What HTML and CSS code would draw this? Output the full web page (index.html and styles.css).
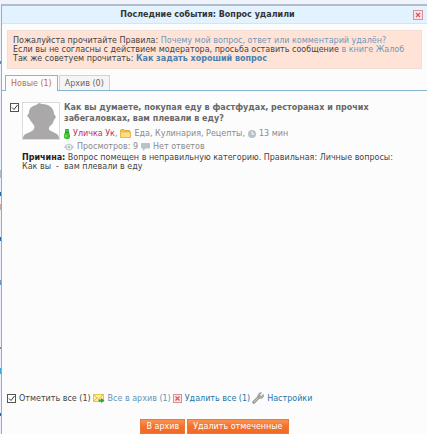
FILE: index.html
```html
<!DOCTYPE html>
<html lang="ru">
<head>
  <meta charset="UTF-8">
  <meta name="viewport" content="width=device-width, initial-scale=1">
  <title>Последние события</title>
  <link rel="stylesheet" href="styles.css">
</head>
<body>

  <div class="popup">
    <div class="popup-head">
      <h1>Последние события: Вопрос удалили</h1>
      <button class="close-btn" type="button" aria-label="Закрыть">
        <svg width="10" height="10" viewBox="0 0 10 10"><rect x=".5" y=".5" width="9" height="9" fill="#fbe3e5" stroke="#d98f95"/><path d="M3 3l4 4M7 3L3 7" stroke="#cf5a62" stroke-width="1.2"/></svg>
      </button>
    </div>

    <div class="notice">
      Пожалуйста прочитайте Правила: <a href="#">Почему мой вопрос, ответ или комментарий удалён?</a><br>
      Если вы не согласны с действием модератора, просьба оставить сообщение <a href="#">в книге Жалоб</a><br>
      Так же советуем прочитать: <a href="#" class="strong">Как задать хороший вопрос</a>
    </div>

    <div class="tabs">
      <button class="tab active" type="button">Новые (1)</button>
      <button class="tab" type="button">Архив (0)</button>
    </div>

    <div class="events">
      <div class="event">
        <input type="checkbox" class="check" aria-label="Отметить событие" checked>
        <div class="event-body">
          <div class="question">
            <svg class="avatar" viewBox="0 0 38 38"><rect x=".5" y=".5" width="37" height="37" fill="#fff" stroke="#dcdcdc"/><path d="M1 37C1 33 3 32 6 31L10 29C13 27 13 24 11 22L8 18L7 16L5 14L7 11C7 6 10 4 14 3L17 1L20 2C27 2 32 6 32 12L34 15L32 18C31 21 30 23 28 24C26 27 27 28 29 29L33 31C36 32 37 34 37 37Z" fill="#aaa8a9"/></svg>
            <div class="question-info">
              <h2>Как вы думаете, покупая еду в фастфудах, ресторанах и прочих<br>забегаловках, вам плевали в еду?</h2>
              <div class="meta">
                <svg width="6" height="10" viewBox="0 0 6 10"><path d="M1 0H5V3L6 6V8Q6 10 3 10T0 8V6L1 3Z" fill="#3fc231"/><path d="M1 3.5H5" stroke="#23962a"/><path d="M2 6v2" stroke="#b8f099"/></svg>
                <span><a href="#" class="user">Уличка Ук</a>,</span>
                <svg class="folder" width="11" height="9" viewBox="0 0 11 9"><path d="M.5 8V1.5Q.5.5 1.5.5H4L5 1.5H9Q10 1.5 10 2.5V8Z" fill="#f3c04c" stroke="#dda83e"/><path d="M.5 8.5V4Q.5 3 1.5 3H9.5Q10.5 3 10.5 4V8.5Z" fill="#ffdf83" stroke="#e8b850"/></svg>
                <span>Еда, Кулинария, Рецепты,</span>
                <svg class="clock" width="8" height="8" viewBox="0 0 8 8"><circle cx="4" cy="4" r="4" fill="#b9c2c9"/><path d="M4 1.5V4.2H6" fill="none" stroke="#fff"/></svg>
                <span>13 мин</span>
              </div>
              <div class="meta">
                <svg width="10" height="8" viewBox="0 0 10 8"><path d="M0 4Q5-3 10 4Q5 11 0 4Z" fill="#c0c9cf"/><circle cx="5" cy="4" r="2.3" fill="#fff"/><circle cx="5" cy="4" r="1.4" fill="#b4bec6"/></svg>
                <span>Просмотров: 9</span>
                <svg width="9" height="8" viewBox="0 0 9 8"><path d="M1 0H8Q9 0 9 1V4.5Q9 5.5 8 5.5H4.5L2 8V5.5H1Q0 5.5 0 4.5V1Q0 0 1 0Z" fill="#b9c2c9"/></svg>
                <span>Нет ответов</span>
              </div>
            </div>
          </div>
          <div class="reason"><b>Причина:</b> Вопрос помещен в неправильную категорию. Правильная: Личные вопросы:<br>Как вы&nbsp; -&nbsp; вам плевали в еду</div>
        </div>
      </div>
    </div>

    <div class="actions">
      <label><input type="checkbox" class="check" checked> Отметить все (1)</label>
      <a href="#" class="light">
        <svg width="12" height="10" viewBox="0 0 12 10"><rect x=".5" y="1.5" width="10" height="7" fill="#fff0a0" stroke="#e0c64e"/><path d="M1 2l4.5 4L10 2M1 8l3-3" fill="none" stroke="#dfbd4a"/><path d="M5.5 6.5H8V5L11.5 7.5L8 10V8.5H5.5Z" fill="#31a52d"/></svg>
        Все в архив (1)</a>
      <a href="#">
        <svg width="9" height="9" viewBox="0 0 9 9"><rect x=".5" y=".5" width="8" height="8" fill="#fbe3e5" stroke="#d98f95"/><path d="M2.5 2.5l4 4M6.5 2.5l-4 4" stroke="#cf5a62" stroke-width="1.2"/></svg>
        Удалить все (1)</a>
      <a href="#">
        <svg width="12" height="12" viewBox="0 0 12 12"><path d="M1.8 10.2L7 5" stroke="#888" stroke-width="3" stroke-linecap="round"/><path d="M2 10L7 5" stroke="#c4c4c4" stroke-width="1.2" stroke-linecap="round"/><path d="M9.5.8L7.8 2.5V4.2H9.5L11.3 2.5Q12 5 10.2 6T6.5 5.5Q5.5 3.5 6.5 2T9.5.8Z" fill="#b5b5b5" stroke="#888" stroke-width=".7"/></svg>
        Настройки</a>
    </div>

    <div class="buttons">
      <button type="button">В архив</button>
      <button type="button">Удалить отмеченные</button>
    </div>
  </div>

</body>
</html>
```
FILE: styles.css
```css
* {
  box-sizing: border-box;
}
html, body {
  margin: 0;
  height: 100%;
  overflow: hidden;
}
/* слева от окна виден край страницы под ним */
body {
  padding: 4px 0 0 1px;
  background:
    linear-gradient(#5f8fae, #5f8fae) 0 61px / 1px 3px no-repeat,
    linear-gradient(#a9bccb, #a9bccb) 0 170px / 1px 8px no-repeat,
    linear-gradient(#1a6ea8, #1a6ea8) 0 192px / 1px 4px no-repeat,
    linear-gradient(#c9ab9d, #c9ab9d) 0 204px / 1px 6px no-repeat,
    linear-gradient(#1a6ea8, #1a6ea8) 0 237px / 1px 4px no-repeat,
    linear-gradient(#7296c4, #7296c4) 0 280px / 1px 5px no-repeat,
    linear-gradient(#888, #888) 0 347px / 1px 2px no-repeat,
    linear-gradient(#3aa7dd, #3aa7dd) 0 368px / 1px 6px no-repeat,
    linear-gradient(#1a6ea8, #1a6ea8) 0 413px / 1px 3px no-repeat,
    #edf2fb;
  color: #444;
  font: 8px/9px Verdana, "DejaVu Sans", sans-serif;
}
a {
  color: #1c76a8;
  text-decoration: none;
}
button {
  font: inherit;
  cursor: pointer;
}
svg {
  display: block;
  flex: none;
}

.popup {
  display: flex;
  flex-direction: column;
  height: 100%;
  background: #fcfcfc;
  border-top: 2px solid #b3bcca;
  border-left: 1px solid #a2a9b5;
}
.popup-head {
  display: flex;
  align-items: center;
  height: 18px;
  padding-right: 4px;
  background: #e2f2fe;
  border-bottom: 1px solid #d9e3ea;
}
.popup-head h1 {
  flex: 1;
  margin: 0;
  font-size: 8px;
  text-align: center;
  color: #333;
}
.close-btn {
  padding: 0;
  border: 0;
  background: none;
}

.notice {
  margin: 6px 5px;
  padding: 5px;
  background: #ffe3d7;
  border: 1px solid #f2ddd4;
}
.notice a {
  color: #7299b8;
}
.notice .strong {
  color: #4a80ad;
  font-weight: bold;
}

/* Вкладки */
.tabs {
  display: flex;
  align-items: flex-end;
  gap: 1px;
  padding-left: 3px;
  border-bottom: 1px solid #87b5d0;
}
.tab {
  height: 15px;
  padding: 0 5px;
  border: 1px solid #d2d2d2;
  border-bottom: 0;
  background: #f5f5f5;
  color: #666;
}
.tab.active {
  height: 16px;
  margin-bottom: -1px;
  border-color: #87b5d0;
  background: #fcfcfc;
  color: #c5702a;
}

.check {
  appearance: none;
  flex: none;
  width: 9px;
  height: 9px;
  margin: 0;
  border: 1px solid #555;
  background: #fff;
}
.check:checked {
  background: url("data:image/svg+xml,%3Csvg xmlns='http://www.w3.org/2000/svg' viewBox='0 0 7 7'%3E%3Cpath d='M1 3.5l2 2 3.5-4.5' fill='none' stroke='%23333'/%3E%3C/svg%3E") #fff;
}

/* Список событий */
.events {
  flex: 1;
  padding: 11px 8px 0;
}
.event {
  display: flex;
  gap: 3px;
}
.event .check {
  margin-top: 1px;
}
.event-body {
  flex: 1;
}
.question {
  display: flex;
  gap: 4px;
}
.avatar {
  width: 38px;
  height: 38px;
}
.question-info {
  flex: 1;
}
.question h2 {
  margin: 0 0 3px;
  font-size: 8px;
  line-height: 11px;
  color: #686868;
}
.meta {
  display: flex;
  align-items: center;
  gap: 3px;
  height: 13px;
  color: #8a8a8a;
}
.user {
  color: #c42a57;
}
.reason b {
  color: #222;
}

.actions {
  display: flex;
  align-items: center;
  gap: 2px;
  padding-left: 5px;
}
.actions a,
.actions label {
  display: flex;
  align-items: center;
  gap: 3px;
}
.actions .light {
  color: #6595b9;
}

.buttons {
  display: flex;
  justify-content: center;
  gap: 2px;
  margin-top: 15px;
}
.buttons button {
  height: 15px;
  padding: 0 5px;
  border: 1px solid #e97b38;
  background: linear-gradient(#fa9351, #f5702b 50%, #f26a24);
  color: #fff;
}
```
